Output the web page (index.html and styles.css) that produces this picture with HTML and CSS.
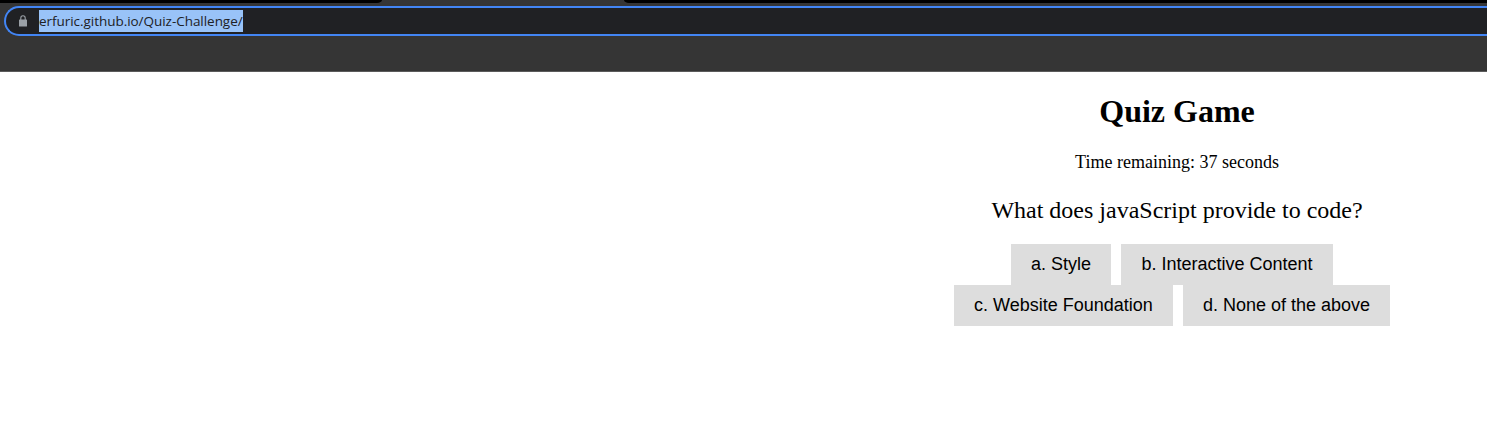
FILE: index.html
```html
<!DOCTYPE html>
<html lang="en">
<head>
<meta charset="utf-8">
<title>Quiz Game</title>
<link rel="stylesheet" href="styles.css">
</head>
<body>
<header class="browser">
  <div class="tabstrip"><div class="tabs-before"></div><div class="tabs-after"></div></div>
  <div class="omnibox">
    <svg class="lock" width="8" height="12" viewBox="0 0 8 12"><path d="M1.8 5V3a2.2 2.2 0 0 1 4.4 0v2" fill="none" stroke="#9aa0a6" stroke-width="1.1"/><rect y="4.5" width="8" height="7" rx=".6" fill="#9aa0a6"/></svg>
    <span class="url">erfuric.github.io/Quiz-Challenge/</span>
  </div>
</header>
<main class="quiz">
  <h1 class="title">Quiz Game</h1>
  <p class="timer">Time remaining: 37 seconds</p>
  <p class="question">What does javaScript provide to code?</p>
  <div class="answers">
    <div class="row"><button class="answer style">a. Style</button><button class="answer content">b. Interactive Content</button></div>
    <div class="row"><button class="answer foundation">c. Website Foundation</button><button class="answer none">d. None of the above</button></div>
  </div>
</main>
</body>
</html>
```
FILE: styles.css
```css
body {
  margin: 0;
  background: #fff;
  color: #000;
  font-family: "Liberation Serif", "Times New Roman", serif;
  overflow: hidden;
}
.browser {
  box-sizing: border-box;
  height: 72px;
  background: #353535;
  border-bottom: 1px solid #5b5b5b;
}
.tabstrip {
  display: flex;
  justify-content: space-between;
  height: 3px;
  margin-bottom: 3px;
}
.tabs-before {
  width: 382px;
  background: #000;
  border-bottom-right-radius: 5px 3px;
}
.tabs-after {
  width: 863px;
  background: #000;
  border-bottom-left-radius: 5px 3px;
}
.omnibox {
  box-sizing: border-box;
  display: flex;
  align-items: center;
  height: 30px;
  margin-left: 4px;
  padding-left: 13px;
  border: 2px solid #4285f4;
  border-right: 0;
  border-radius: 15px 0 0 15px;
  background: #202124;
}
.lock {
  flex: none;
  margin-right: 12px;
}
.url {
  box-sizing: border-box;
  width: 204px;
  height: 22px;
  background: #99c3f8;
  color: #202124;
  font: 13.5px/22px "Open Sans", sans-serif;
  letter-spacing: -0.04px;
  white-space: nowrap;
}
.quiz {
  width: 620px;
  margin-left: 867px;
  text-align: center;
}
.title {
  margin: 0;
  padding-top: 21px;
  font-size: 32px;
  line-height: 37px;
}
.timer {
  margin: 22px 0 0;
  font-size: 18px;
  line-height: 21px;
}
.question {
  margin: 23px 0 0;
  font-size: 24px;
  line-height: 28px;
}
.answers {
  margin-top: 20px;
}
.row {
  display: flex;
  justify-content: center;
  gap: 10px;
  padding-right: 10px;
}
.answer {
  height: 41px;
  padding: 0;
  border: 0;
  background: #ddd;
  color: #000;
  font: 18px/21px "Liberation Sans", Arial, sans-serif;
  white-space: nowrap;
}
.style { width: 100px; }
.content { width: 212px; }
.foundation { width: 219px; }
.none { width: 207px; }
```
